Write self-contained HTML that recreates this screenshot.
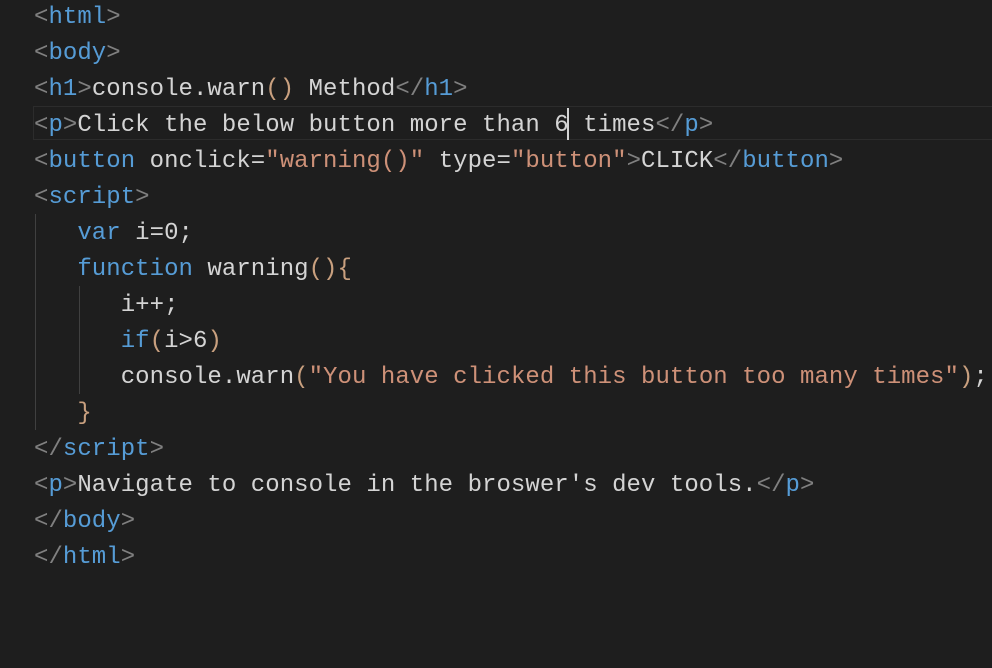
<!DOCTYPE html>
<html><head><style>
body{margin:0;background:#1e1e1e;width:992px;height:668px;overflow:hidden;}
pre{margin:0;position:absolute;left:34px;top:0px;font:24px/36px "Liberation Mono",monospace;color:#d4d4d4;letter-spacing:0.05px}
.b{color:#808080}.t{color:#569cd6}.a{color:#d4d4d4}.s{color:#ce9178}.k{color:#569cd6}.p{color:#c9a07f}
.cl{position:absolute;left:33px;top:106px;width:960px;height:34px;border:1px solid #2c2c2c;box-sizing:border-box}
.g{position:absolute;width:1px;background:#404040}
.cur{position:absolute;left:567px;top:108px;width:2px;height:32px;background:#d4d4d4}
</style></head><body>
<div class="cl"></div>
<div class="g" style="left:35px;top:214px;height:216px"></div>
<div class="g" style="left:79px;top:286px;height:108px"></div>
<div class="cur"></div>
<pre><span class="b">&lt;</span><span class="t">html</span><span class="b">&gt;</span>
<span class="b">&lt;</span><span class="t">body</span><span class="b">&gt;</span>
<span class="b">&lt;</span><span class="t">h1</span><span class="b">&gt;</span>console.warn<span class="p">()</span> Method<span class="b">&lt;/</span><span class="t">h1</span><span class="b">&gt;</span>
<span class="b">&lt;</span><span class="t">p</span><span class="b">&gt;</span>Click the below button more than 6 times<span class="b">&lt;/</span><span class="t">p</span><span class="b">&gt;</span>
<span class="b">&lt;</span><span class="t">button</span> <span class="a">onclick</span>=<span class="s">"warning()"</span> <span class="a">type</span>=<span class="s">"button"</span><span class="b">&gt;</span>CLICK<span class="b">&lt;/</span><span class="t">button</span><span class="b">&gt;</span>
<span class="b">&lt;</span><span class="t">script</span><span class="b">&gt;</span>
   <span class="k">var</span> i=0;
   <span class="k">function</span> warning<span class="p">(){</span>
      i++;
      <span class="k">if</span><span class="p">(</span>i&gt;6<span class="p">)</span>
      console.warn<span class="p">(</span><span class="s">"You have clicked this button too many times"</span><span class="p">)</span>;
   <span class="p">}</span>
<span class="b">&lt;/</span><span class="t">script</span><span class="b">&gt;</span>
<span class="b">&lt;</span><span class="t">p</span><span class="b">&gt;</span>Navigate to console in the broswer's dev tools.<span class="b">&lt;/</span><span class="t">p</span><span class="b">&gt;</span>
<span class="b">&lt;/</span><span class="t">body</span><span class="b">&gt;</span>
<span class="b">&lt;/</span><span class="t">html</span><span class="b">&gt;</span></pre>
</body></html>
